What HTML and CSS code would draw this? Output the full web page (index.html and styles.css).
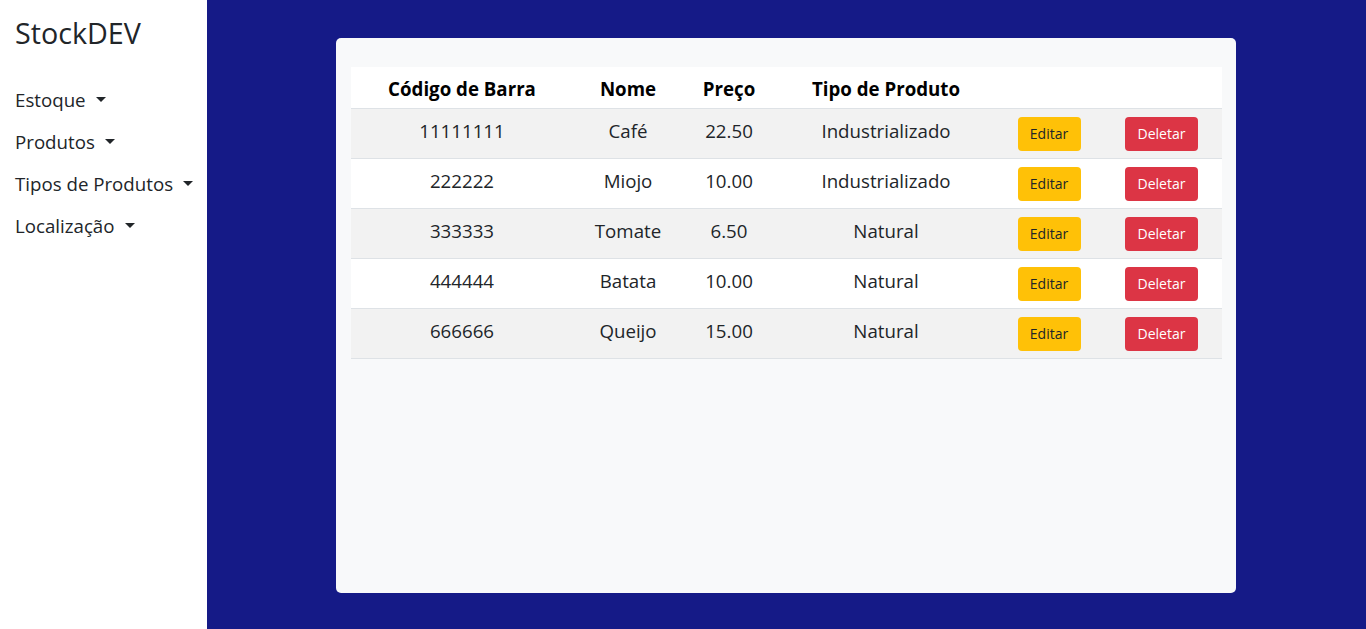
FILE: index.html
```html
<!DOCTYPE html>
<html lang="pt">
<head>
<meta charset="utf-8">
<title>StockDEV</title>
<link rel="stylesheet" href="styles.css">
</head>
<body>
<div class="layout">
  <aside class="sidebar">
    <div class="brand">StockDEV</div>
    <nav class="menu">
      <a class="menu-item">Estoque<span class="caret"></span></a>
      <a class="menu-item">Produtos<span class="caret"></span></a>
      <a class="menu-item">Tipos de Produtos<span class="caret"></span></a>
      <a class="menu-item">Localização<span class="caret"></span></a>
    </nav>
  </aside>
  <main class="main">
    <section class="card">
      <table class="table">
        <colgroup>
          <col class="c1"><col class="c2"><col class="c3"><col class="c4"><col class="c5"><col class="c6">
        </colgroup>
        <thead>
          <tr><th>Código de Barra</th><th>Nome</th><th>Preço</th><th>Tipo de Produto</th><th></th><th></th></tr>
        </thead>
        <tbody>
          <tr><td>11111111</td><td>Café</td><td>22.50</td><td>Industrializado</td><td><button class="btn btn-edit">Editar</button></td><td><button class="btn btn-del">Deletar</button></td></tr>
          <tr><td>222222</td><td>Miojo</td><td>10.00</td><td>Industrializado</td><td><button class="btn btn-edit">Editar</button></td><td><button class="btn btn-del">Deletar</button></td></tr>
          <tr><td>333333</td><td>Tomate</td><td>6.50</td><td>Natural</td><td><button class="btn btn-edit">Editar</button></td><td><button class="btn btn-del">Deletar</button></td></tr>
          <tr><td>444444</td><td>Batata</td><td>10.00</td><td>Natural</td><td><button class="btn btn-edit">Editar</button></td><td><button class="btn btn-del">Deletar</button></td></tr>
          <tr><td>666666</td><td>Queijo</td><td>15.00</td><td>Natural</td><td><button class="btn btn-edit">Editar</button></td><td><button class="btn btn-del">Deletar</button></td></tr>
        </tbody>
      </table>
    </section>
  </main>
</div>
</body>
</html>
```

FILE: styles.css
```css
* { box-sizing: border-box; }
html, body { margin: 0; padding: 0; height: 100%; }
body {
  font-family: "Open Sans", "Noto Sans", sans-serif;
  color: #212529;
  background: #151a87;
}
.layout { display: flex; height: 629px; }
.sidebar {
  width: 207px;
  flex: none;
  background: #ffffff;
  padding: 12px 0 0 15px;
}
.brand {
  font-size: 28.7px;
  line-height: 42px;
  color: #212529;
}
.menu {
  display: flex;
  flex-direction: column;
  margin-top: 32px;
  gap: 15px;
}
.menu-item {
  font-size: 18.7px;
  line-height: 27px;
  color: #212529;
  display: flex;
  align-items: center;
  white-space: nowrap;
}
.caret {
  display: inline-block;
  flex: none;
  width: 0; height: 0;
  margin-left: 10px;
  border-left: 5px solid transparent;
  border-right: 5px solid transparent;
  border-top: 5px solid #212529;
}
.main {
  flex: 1;
  display: flex;
  justify-content: flex-start;
  padding: 38px 0 0 129px;
}
.card {
  width: 900px;
  height: 555px;
  background: #f8f9fa;
  border-radius: 5px;
  padding: 29px 14px 0 15px;
}
.table {
  width: 871px;
  border-collapse: collapse;
  table-layout: fixed;
  font-size: 18.7px;
  line-height: 27px;
}
.c1 { width: 222px; } .c2 { width: 110px; } .c3 { width: 92px; }
.c4 { width: 222px; } .c5 { width: 104px; } .c6 { width: 121px; }
.table th {
  background: #ffffff;
  font-weight: 700;
  color: #000;
  padding: 8px 4px 6px;
  border-bottom: 1px solid #dee2e6;
  text-align: center;
}
.table td {
  padding: 8px 4px 7px;
  vertical-align: top;
  text-align: center;
  border-bottom: 1px solid #dee2e6;
  height: 50px;
}
.table tbody tr:nth-child(odd) td { background: #f2f2f2; }
.table tbody tr:nth-child(even) td { background: #ffffff; }
.btn {
  font-family: "Open Sans", "Noto Sans", sans-serif;
  font-size: 14px;
  line-height: 20px;
  height: 34px;
  padding: 7px 0 7px;
  border: none;
  border-radius: 4px;
  display: inline-block;
}
.btn-edit { background: #ffc107; color: #212529; width: 63px; }
.btn-del { background: #dc3545; color: #ffffff; width: 73px; }
```
